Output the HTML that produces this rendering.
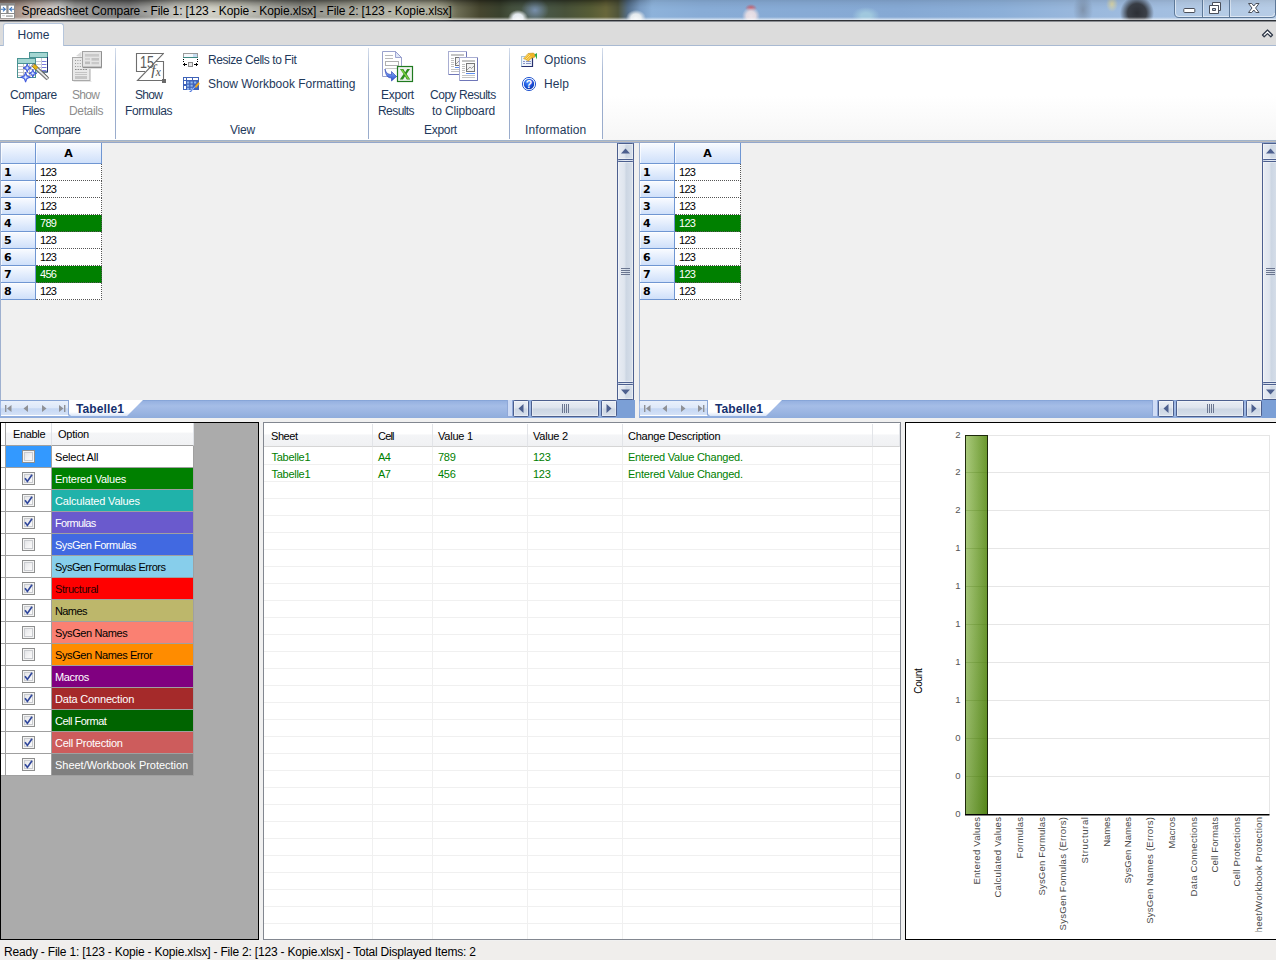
<!DOCTYPE html>
<html lang="en">
<head>
<meta charset="utf-8">
<title>Spreadsheet Compare</title>
<style>
*{box-sizing:border-box;margin:0;padding:0}
html,body{width:1276px;height:960px;overflow:hidden;background:#f0f0f0}
body{position:relative;font-family:"Liberation Sans",sans-serif;font-size:12px;color:#000}
.abs{position:absolute}
/* ---------- title bar ---------- */
#title{left:0;top:0;width:1276px;height:22px;overflow:hidden;
 background:
  radial-gradient(ellipse 10px 8px at 518px 18px,#f2f5f7 0,#e4eaee 50%,rgba(228,234,238,0) 100%),
  radial-gradient(ellipse 14px 12px at 535px 10px,#7890ac 0,rgba(120,144,172,0) 100%),
  radial-gradient(ellipse 10px 8px at 636px 18px,#f2f5f7 0,#e4eaee 50%,rgba(228,234,238,0) 100%),
  radial-gradient(ellipse 9px 9px at 751px 16px,#ebe3e8 0,#e2dae2 50%,rgba(223,220,228,0) 100%),
  radial-gradient(ellipse 6px 4px at 751px 8px,#cc5560 0,rgba(208,96,106,0) 100%),
  radial-gradient(ellipse 14px 9px at 866px 16px,#a0c8de 0,#a0c8de 35%,rgba(156,196,220,0) 100%),
  radial-gradient(ellipse 17px 17px at 1137px 13px,#2c2f35 0,#3b4048 55%,rgba(60,64,72,0) 100%),
  radial-gradient(ellipse 6px 8px at 1112px 4px,#d8d4a8 0,rgba(216,212,168,0) 100%),
  radial-gradient(ellipse 10px 16px at 1083px 10px,#7f93ad 0,rgba(127,147,173,0) 100%),
  linear-gradient(90deg,#9a857b 0,#b4a197 30px,#c6bfba 52px,#c4c4c2 60px,#8e8e8c 75px,#727272 100px,#6c6c6c 130px,#8c8c88 150px,#b6b6ae 175px,#c6c5b8 210px,#b4b4a8 240px,#8c8c84 275px,#77776f 300px,#858579 330px,#9c9c8c 370px,#a8a896 405px,#9c9c84 435px,#6c6c54 458px,#46462f 480px,#3a422e 500px,#46523f 512px,#4a5a4e 535px,#48523a 565px,#565c36 590px,#68663a 606px,#50543a 618px,#55708c 628px,#7b9dc4 640px,#8db2da 652px,#88acd6 700px,#86a9d4 900px,#8cafd8 1000px,#98b7dc 1070px,#a2bee0 1160px,#a9c3e2 1276px);
}
#title .shade{left:0;top:0;width:1276px;height:22px;background:linear-gradient(180deg,rgba(0,0,0,0) 0,rgba(0,0,0,0) 17px,rgba(255,255,255,.35) 18.5px,rgba(255,255,255,.6) 19.5px,rgba(255,255,255,.6) 20px,#2e3136 20px,#2e3136 21.2px,#8a8d92 21.2px)}
#title .dk{left:0;top:0;width:1276px;height:12px;background:linear-gradient(180deg,rgba(0,0,0,.45) 0,rgba(0,0,0,.22) 3px,rgba(0,0,0,.04) 7px,rgba(0,0,0,0) 10px);-webkit-mask-image:linear-gradient(90deg,#000 0,#000 600px,rgba(0,0,0,.22) 655px);mask-image:linear-gradient(90deg,#000 0,#000 600px,rgba(0,0,0,.22) 655px)}
#title .glow{left:24px;top:6px;width:426px;height:11px;background:rgba(255,255,255,.28);filter:blur(4px)}
#title .txt{left:21.5px;top:3px;font-size:12px;letter-spacing:-.11px;line-height:16px;white-space:nowrap;color:#000}
/* ---------- tab strip + ribbon ---------- */
#tabs{left:0;top:22px;width:1276px;height:24px;background:#dcdcdc;border-bottom:1px solid #a9bad2}
#hometab{left:3px;top:23px;width:61px;height:23px;background:#fff;border:1px solid #b6c6dc;border-bottom:none;border-radius:3px 3px 0 0;text-align:center;line-height:22px;font-size:12px;color:#1e395b}
#ribbon{left:0;top:46px;width:1276px;height:97px;background:linear-gradient(#fff,#fff) 0 0/602px 94px no-repeat,linear-gradient(180deg,#fff 0,#fff 50px,#f6f6f6 94px,#a0b3cb 94px,#a0b3cb 95px,#bcbcbc 95px,#bcbcbc 96px,#93a7cc 96px)}
.rl{font-size:12px;color:#1e395b;white-space:nowrap;line-height:16px;text-align:center}
.dis{color:#8d8d8d}
.gsep{top:48px;width:1px;height:91px;background:linear-gradient(180deg,#d5deec 0,#a9b9d4 25%,#9aaccc 60%,#9aaccc 100%)}

/* ---------- sheet panes ---------- */
.pane{top:143px;height:275px;background:#f0f0f0;overflow:hidden}
.pane .lb{left:0;top:0;width:1px;height:276px;background:#9eb0cf}
.hc{background:linear-gradient(180deg,#f9fbff 0,#e6effd 45%,#cfe0fa 100%);border-right:1px solid #6f96d2;border-bottom:1px solid #6f96d2;box-shadow:inset 1px 1px 0 rgba(255,255,255,.7);font:bold 11px "DejaVu Sans","Liberation Sans",sans-serif;color:#000}
.rh{left:1px;width:35px;height:17px;line-height:17.5px;padding-left:3px;overflow:hidden}
.ch{top:0;height:21px;line-height:22.5px;text-align:center;overflow:hidden}
.c{left:36px;width:66px;height:17px;background:#fff;border-right:1px dotted #555;border-bottom:1px dotted #555;font-size:11px;letter-spacing:-.7px;line-height:16px;padding-left:4px;color:#000}
.c.g{background:#008000;color:#fff}
.vs{top:0;width:17px;height:257px;border-left:1px solid #56689a;border-right:1px solid #56689a;background:linear-gradient(90deg,#c3cfe2 0,#dbe3ef 30%,#e6ecf5 50%,#d0dae9 100%)}
.sbtn{background:linear-gradient(180deg,#e8ecf3 0,#dfe5ee 42%,#ccd6e3 55%,#d8e0eb 100%);border:1px solid #4c5f8e;border-radius:1.5px;box-shadow:inset 0 0 0 1px rgba(255,255,255,.4)}
.sbtnv{background:linear-gradient(90deg,#e8ecf3 0,#dfe5ee 42%,#ccd6e3 55%,#d8e0eb 100%);border:1px solid #4c5f8e;border-radius:1.5px;box-shadow:inset 0 0 0 1px rgba(255,255,255,.4)}
.tabbar{left:0;top:257px;height:18px;background:linear-gradient(180deg,#7f9fd4 0,#97b2e1 1.5px,#a5bde7 6px,#9bb5e2 12px,#8facdc 18px)}
.nav{left:1px;top:0;width:68px;height:16px;border-top:1px solid #86a3d4;background:linear-gradient(180deg,#e9f0fb 0,#dde8f9 50%,#c5d7f3 55%,#d5e2f7 100%);border-right:1px solid #8aa6d6;border-bottom:1px solid #fff}
.stab{top:0;height:16px}
.stabtxt{font:bold 12px "Liberation Sans",sans-serif;color:#15306e;letter-spacing:.12px;line-height:16px;top:1px}
.corner{background:#7b9fd6}

/* ---------- lower panels ---------- */
#opt{left:0;top:422px;width:259px;height:518px;background:#ababab;border:1px solid #000}
.oh{top:0;height:23px;background:linear-gradient(180deg,#fff 0,#fff 40%,#f4f5f7 48%,#f1f2f4 100%);border-right:1px solid #dfe2e7;border-bottom:1px solid #a0a0a0;font-size:11px;line-height:23px;white-space:nowrap}
.orh{left:0;width:5px;background:#fff;border-right:1px solid #a0a0a0;border-bottom:1px solid #a0a0a0}
.orow{left:0;width:193px;height:22px}
.ock{left:5px;top:0;width:46px;height:22px;background:#fff;border-right:1px solid #a0a0a0;border-bottom:1px solid #a0a0a0}
.olb{left:51px;top:0;width:142px;height:22px;border-right:1px solid #a0a0a0;border-bottom:1px solid #a0a0a0;font-size:11px;line-height:23px;padding-left:3px;white-space:nowrap;color:#fff;overflow:hidden}
.cb{left:16px;top:4px;width:13px;height:13px;border:1px solid #8e8f8f;background:linear-gradient(135deg,#dcdee2 0,#f3f3f4 55%,#fff 100%);box-shadow:inset 0 0 0 1px #f4f4f4,inset 0 0 0 2px #c9cbcf}
#list{left:263px;top:422px;width:638px;height:518px;background:#fff;border:1px solid #828790}
.lh{top:1px;height:23px;background:linear-gradient(180deg,#fff 0,#fff 45%,#f4f5f7 50%,#f0f1f3 100%);border-right:1px solid #e2e4e8;border-bottom:1px solid #d5d5d5;font-size:11px;line-height:25px;white-space:nowrap}
.lr{font-size:11px;color:#008000;line-height:16px;white-space:nowrap}
#chart{left:905px;top:422px;width:380px;height:518px;background:#fff;border:1px solid #000}
#status{left:0;top:941px;width:1276px;height:19px;background:#f0eeec;font-size:12px;line-height:23px;overflow:hidden;padding-left:4px;letter-spacing:-.2px;white-space:nowrap}
</style>
</head>
<body>
<!-- TITLE -->
<div id="title" class="abs"><div class="dk abs"></div><div class="shade abs"></div><div class="glow abs"></div>
<svg class="abs" style="left:0;top:0" width="22" height="22"><rect x="0" y="3" width="15" height="15.5" fill="#8b8b8b"/><rect x="1" y="5.6" width="5.3" height="7.4" fill="#fff"/><rect x="8.6" y="5.6" width="5.4" height="7.4" fill="#fff"/><path d="M1 9.3H6M3 7.2L5.2 9.3L3 11.4" stroke="#3f78c0" stroke-width="1.1" fill="none"/><path d="M14 9.3H9M12 7.2L9.8 9.3L12 11.4" stroke="#3f78c0" stroke-width="1.1" fill="none"/><rect x="1" y="14" width="13" height="4" fill="#fff"/><rect x="6" y="15.2" width="6.8" height="1.8" fill="#b5b5b5"/><rect x="2.2" y="15.2" width="2.6" height="1" fill="#c5c5c5"/></svg>
<div class="txt abs">Spreadsheet Compare - File 1: [123 - Kopie - Kopie.xlsx] - File 2: [123 - Kopie.xlsx]</div>
<svg class="abs" style="left:1170px;top:0" width="106" height="22"><path d="M4.5 0V13Q4.5 17.5 9 17.5H101Q105.5 17.5 105.5 14V0" fill="rgba(255,255,255,.16)" stroke="#5d7898" stroke-width="1"/><path d="M5.5 0V13Q5.5 16.5 9 16.5H101Q104.5 16.5 104.5 13" fill="none" stroke="rgba(255,255,255,.55)" stroke-width="1"/><path d="M32.5 0V17M59.5 0V17" stroke="#5d7898"/><path d="M33.5 0V16.5M60.5 0V16.5" stroke="rgba(255,255,255,.45)"/>
<rect x="13.8" y="8.5" width="11" height="4" rx=".8" fill="#fff" stroke="#4a4f5a" stroke-width="1"/>
<path d="M42.5 2.5H50.5V10.500H48.5V5.5H42.5Z" fill="#fff" stroke="#4a4f5a"/><path d="M39.500 5.500H48.5V13.500H39.500Z M42.5 8.500V10.500H45.5V8.500Z" fill="#fff" fill-rule="evenodd" stroke="#4a4f5a"/>
<path d="M78.500 3.500H81.8L83.800 6L85.800 3.500H89L85.600 8L89 12.500H85.800L83.800 10L81.800 12.500H78.500L82 8Z" fill="#fff" stroke="#4a4f5a" stroke-width="1" stroke-linejoin="round"/></svg>
</div>
<!-- TABS -->
<div id="tabs" class="abs"><svg class="abs" style="left:1261px;top:7px" width="14" height="10"><path d="M1.5 6L6.500 1L11.500 6L9.800 7.700L6.500 4.600L3.200 7.700Z" fill="#fff" stroke="#2f3848" stroke-width="1.300" stroke-linejoin="round"/></svg></div>
<div id="ribbon" class="abs"></div>
<div id="hometab" class="abs">Home</div>

<!-- ribbon labels -->
<div class="rl abs" style="left:10px;top:87px;letter-spacing:-.36px">Compare</div>
<div class="rl abs" style="left:22px;top:103px;letter-spacing:-.59px">Files</div>
<div class="rl abs dis" style="left:72px;top:87px;letter-spacing:-.68px">Show</div>
<div class="rl abs dis" style="left:69px;top:103px;letter-spacing:-.35px">Details</div>
<div class="rl abs" style="left:135px;top:87px;letter-spacing:-.68px">Show</div>
<div class="rl abs" style="left:125px;top:103px;letter-spacing:-.35px">Formulas</div>
<div class="rl abs" style="left:208px;top:52px;letter-spacing:-.44px">Resize Cells to Fit</div>
<div class="rl abs" style="left:208px;top:76px;letter-spacing:-.02px">Show Workbook Formatting</div>
<div class="rl abs" style="left:381px;top:87px;letter-spacing:-.3px">Export</div>
<div class="rl abs" style="left:378px;top:103px;letter-spacing:-.57px">Results</div>
<div class="rl abs" style="left:430px;top:87px;letter-spacing:-.47px">Copy Results</div>
<div class="rl abs" style="left:432px;top:103px;letter-spacing:-.14px">to Clipboard</div>
<div class="rl abs" style="left:544px;top:52px;letter-spacing:.1px">Options</div>
<div class="rl abs" style="left:544px;top:76px;letter-spacing:.1px">Help</div>
<div class="rl abs" style="left:34px;top:122px;letter-spacing:-.4px">Compare</div>
<div class="rl abs" style="left:230px;top:122px;letter-spacing:-.23px">View</div>
<div class="rl abs" style="left:424px;top:122px;letter-spacing:-.3px">Export</div>
<div class="rl abs" style="left:525px;top:122px;letter-spacing:.12px">Information</div>
<div class="gsep abs" style="left:115px"></div>
<div class="gsep abs" style="left:368px"></div>
<div class="gsep abs" style="left:509px"></div>
<div class="gsep abs" style="left:602px"></div>
<svg class="abs" style="left:0;top:0" width="610" height="140" font-family="'Liberation Sans',sans-serif">
<defs><linearGradient id="wand" x1="0" y1="0" x2="1" y2="0"><stop offset="0" stop-color="#777"/><stop offset=".5" stop-color="#fff"/><stop offset="1" stop-color="#666"/></linearGradient><radialGradient id="help" cx=".4" cy=".3" r=".8"><stop offset="0" stop-color="#4f8dff"/><stop offset=".6" stop-color="#1750d8"/><stop offset="1" stop-color="#0a2f9c"/></radialGradient><linearGradient id="arr" x1="0" y1="0" x2="0" y2="1"><stop offset="0" stop-color="#9cc0ff"/><stop offset="1" stop-color="#2a4fd0"/></linearGradient></defs>
<g><rect x="29.5" y="52.5" width="18" height="19.5" fill="#fff" stroke="#4a9393"/><rect x="30" y="53" width="17" height="4" fill="#a4d6d2"/><path d="M29.5 57.5H47.5" stroke="#4a9393"/><path d="M47.5 57V72H41" stroke="#27306e" fill="none"/><path d="M30 61.5H47M30 64.5H47M30 67.5H47M30 70.5H47" stroke="#c9c9d8" /><path d="M41.5 58V71M35.5 58V71" stroke="#c9c9d8"/><path d="M42 61.5H46M42 64.5H46M42 67.5H46M42 70.5H46" stroke="#7a7ae0"/><rect x="17.5" y="58.5" width="18" height="19" fill="#fff" stroke="#4a9393"/><rect x="18" y="59" width="17" height="4" fill="#a4d6d2"/><path d="M17.5 63.5H35.5" stroke="#4a9393"/><path d="M18 66.5H35M18 69.5H35M18 72.5H35M18 75.5H35M23.5 64V77M29.5 64V77" stroke="#c4c4c4"/><path d="M27.2 63.8L28.4 66.8L31.4 68.0L28.4 69.2L27.2 72.2L26.0 69.2L23.0 68.0L26.0 66.8Z" fill="#6f8cf2" stroke="#2b44d6" stroke-width=".8"/><path d="M27.2 66.1L27.7 67.5L29.1 68.0L27.7 68.5L27.2 69.9L26.7 68.5L25.3 68.0L26.7 67.5Z" fill="#e9efff"/><path d="M32.8 69.3L33.9 72.2L36.8 73.3L33.9 74.4L32.8 77.3L31.7 74.4L28.8 73.3L31.7 72.2Z" fill="#6f8cf2" stroke="#2b44d6" stroke-width=".8"/><path d="M32.8 71.5L33.3 72.8L34.6 73.3L33.3 73.8L32.8 75.1L32.3 73.8L31.0 73.3L32.3 72.8Z" fill="#e9efff"/><path d="M25.6 72.2L27.0 75.8L30.6 77.2L27.0 78.6L25.6 82.2L24.2 78.6L20.6 77.2L24.2 75.8Z" fill="#6f8cf2" stroke="#2b44d6" stroke-width=".8"/><path d="M25.6 75.0L26.2 76.6L27.9 77.2L26.2 77.8L25.6 79.5L25.0 77.8L23.4 77.2L25.0 76.6Z" fill="#e9efff"/><g transform="translate(32.5,64.5) rotate(-47)"><rect x="-1.6" y="0" width="3.2" height="21" rx="1.2" fill="url(#wand)" stroke="#555" stroke-width=".7"/><rect x="-1.6" y="1.5" width="3.2" height="4.5" fill="#e8b414" stroke="#9a7400" stroke-width=".5"/></g></g>
<g><rect x="73.5" y="81" width="18" height="1" fill="#e4e4e4"/><rect x="72.5" y="57.5" width="17.5" height="23" fill="#e9e9e9" stroke="#a9a9a9"/><path d="M75 60.5H88M75 63.5H88M75 66.5H88" stroke="#9a9a9a" stroke-dasharray="1 1.4"/><path d="M75 69.5H87" stroke="#8a8a8a" stroke-dasharray="1.6 1"/><path d="M75 72.5H87M75 74.5H87" stroke="#c4c4c4"/><rect x="75" y="76" width="12" height="3" fill="#c6c6c6"/><path d="M76 56L81.5 51.5V57" fill="#dcdcdc"/><rect x="82.5" y="68" width="19.5" height="1" fill="#e0e0e0"/><rect x="82.5" y="51.5" width="19" height="15.5" fill="#e4e4e4" stroke="#a3a3a3"/><path d="M101.5 52V67.5H83" stroke="#8f8f8f" fill="none"/><rect x="85" y="54" width="14" height="2.6" fill="#c9c9c9"/><rect x="85" y="58" width="5" height="2" fill="#cfcfcf"/><rect x="91.5" y="58" width="7.5" height="2.6" fill="#c2c2c2"/><rect x="85" y="61.5" width="5" height="2.6" fill="#bdbdbd"/><rect x="91.5" y="62" width="7.5" height="2.2" fill="#c9c9c9"/></g>
<g fill="none" stroke="#6e6e6e" stroke-width="1.1"><path d="M163.5 53.5H136.5V71.5H145"/><path d="M163.8 53.2L137.5 80.5H163.5V61.5H156"/></g><rect x="162" y="79" width="4" height="4" fill="#6a6a6a"/><text x="140" y="68" font-size="16.5" fill="#5a5a5a" textLength="14" lengthAdjust="spacingAndGlyphs" style="font-weight:normal">15</text><text x="151.2" y="75" font-size="15.5" font-style="italic" font-family="'Liberation Serif',serif" fill="#555">f</text><text x="155.8" y="75.5" font-size="11.5" font-style="italic" font-family="'Liberation Serif',serif" fill="#555">x</text>
<g><rect x="183.5" y="53.5" width="14" height="4" fill="#f4f8fc" stroke="#9a9a9a"/><rect x="193" y="54" width="4" height="3" fill="#c5dcf0"/><path d="M183 57.5H198" stroke="#3f8a84"/><path d="M183.5 59V63M197.5 59V63" stroke="#000" stroke-dasharray="1 1"/><path d="M183 64.5H187M194 64.5H198" stroke="#000" stroke-width="1"/><path d="M184.5 63V66M196.5 63V66" stroke="#000" stroke-width="1"/><rect x="188.5" y="62.5" width="4" height="4" fill="#e8e8e8" stroke="#8a8a8a"/></g>
<g><rect x="183" y="77" width="16" height="13" fill="#3f63b8"/><rect x="184" y="78" width="2" height="2" fill="#fff"/><rect x="187" y="78" width="5" height="2" fill="#fff"/><rect x="193" y="78" width="5" height="2" fill="#fff"/><rect x="184" y="81" width="2" height="3" fill="#fff"/><rect x="184" y="86" width="2" height="3" fill="#fff"/><g fill="#8fb6ee"><rect x="187" y="81.5" width="2.2" height="2"/><rect x="190.5" y="81.5" width="2.2" height="2"/><rect x="194" y="81.5" width="2.2" height="2"/><rect x="187" y="84.7" width="2.2" height="2"/><rect x="190.5" y="84.7" width="2.2" height="2"/><rect x="187" y="87.8" width="2.2" height="2"/><rect x="190.5" y="87.8" width="2.2" height="2"/></g><path d="M198.8 82L194.5 86.5L196 88L199.6 84Z" fill="#f0a818"/><path d="M195.5 86L191 92L189 91.6C192 90 193.5 88 194 85.4Z" fill="#3a66d8"/><path d="M195 86.5L192 90.5" stroke="#bcd4ff" stroke-width=".8"/></g>
<g><path d="M382.5 51.5H395.5L401.5 57.5V76.5H382.5Z" fill="#fff" stroke="#9aa2cc"/><path d="M395.5 51.5V57.5H401.5Z" fill="#dfe6f6" stroke="#8a92c8" stroke-width=".8"/><path d="M385 55.5H393M385 58.5H393" stroke="#b9b9b9"/><rect x="385.5" y="61.5" width="13" height="4" fill="#fff" stroke="#b0b0b0"/><path d="M385 68.5H397" stroke="#c9c9c9"/><path d="M385 69C386 73 388 74.5 391.5 74.5V71.5L396.5 76.5L391.5 81V78C387.5 78 385.5 75 385 69Z" fill="url(#arr)" stroke="#2438b0" stroke-width=".6"/><rect x="397.5" y="66.5" width="15" height="15" fill="#eef2ee" stroke="#1f7a1f" stroke-width="1.2"/><path d="M400 69H403.3L405.2 72.2L407.2 69H410L406.6 74L410.2 79.5H406.8L405 76.2L403 79.5H399.8L403.6 74Z" fill="#2c8c1c"/><path d="M401.5 69.5L408.5 79" stroke="#7fd040" stroke-width="1.3"/></g>
<g><rect x="448.5" y="51.5" width="18" height="23" fill="#fff" stroke="#a9aed2"/><path d="M466.5 52V74.5H449" stroke="#6f76b8" fill="none"/><rect x="451" y="54" width="13" height="2" fill="#c4c4c4"/><path d="M451 58.5H454M451 60.5H454M451 62.5H454M451 64.5H454M451 66.5H454" stroke="#c0c0c0"/><rect x="455.5" y="57.5" width="8" height="8" fill="#f1f1f1" stroke="#777"/><path d="M456 64L459 61L460.5 62.5L463 60" stroke="#888" fill="none" stroke-width=".8"/><path d="M455 67.5H464" stroke="#5b8cf0"/><path d="M451 69.5H464M451 71.5H464" stroke="#c4c4c4"/><rect x="459.5" y="57.5" width="18" height="23" fill="#fff" stroke="#a9aed2"/><path d="M477.5 58V80.5H460" stroke="#6f76b8" fill="none"/><rect x="462" y="60" width="13" height="2" fill="#c4c4c4"/><path d="M462 64.5H465M462 66.5H465M462 68.5H465M462 70.5H465M462 72.5H465" stroke="#c0c0c0"/><rect x="466.5" y="63.5" width="8" height="8" fill="#f1f1f1" stroke="#777"/><path d="M467 70L470 67L471.5 68.5L474 66" stroke="#888" fill="none" stroke-width=".8"/><path d="M466 73.5H475" stroke="#5b8cf0"/><path d="M462 75.5H475M462 77.5H475" stroke="#c4c4c4"/></g>
<g><rect x="521.5" y="56.5" width="11" height="10" fill="#eef4fb" stroke="#a8c4dc"/><path d="M532.5 57V66.5H521.5" stroke="#27306e" fill="none" stroke-width="1.2"/><path d="M523 61.5H525M526 61.5H531M523 63.5H525M526 63.5H531" stroke="#8a96c8"/><path d="M523.5 58.5L528 53.5L533.5 53L535 54.5L535 57L531 58.5L528.5 61Z" fill="#f0b428" stroke="#b88a18" stroke-width=".5"/><path d="M524 58.5L528.5 54M525.5 59.5L530 55M527 60.5L531 56.5" stroke="#fff3b0" stroke-width=".7"/><path d="M534.5 54.5L537 53V59.5Z" fill="#2fa84a"/></g>
<g><circle cx="529" cy="84" r="6.6" fill="#fff" stroke="#2a5bd0" stroke-width="1"/><circle cx="529" cy="84" r="5.2" fill="url(#help)"/><text x="529" y="88" font-size="10.5" font-weight="bold" fill="#fff" text-anchor="middle">?</text></g>
</svg>


<!--SHEETS-START-->
<div class="pane abs" style="left:0px;width:635px">
<div class="lb abs"></div>
<div class="hc ch abs" style="left:1px;width:35px"></div><div class="hc ch abs" style="left:36px;width:66px">A</div>
<div class="hc rh abs" style="top:21px">1</div><div class="c abs" style="top:21px">123</div>
<div class="hc rh abs" style="top:38px">2</div><div class="c abs" style="top:38px">123</div>
<div class="hc rh abs" style="top:55px">3</div><div class="c abs" style="top:55px">123</div>
<div class="hc rh abs" style="top:72px">4</div><div class="c g abs" style="top:72px">789</div>
<div class="hc rh abs" style="top:89px">5</div><div class="c abs" style="top:89px">123</div>
<div class="hc rh abs" style="top:106px">6</div><div class="c abs" style="top:106px">123</div>
<div class="hc rh abs" style="top:123px">7</div><div class="c g abs" style="top:123px">456</div>
<div class="hc rh abs" style="top:140px">8</div><div class="c abs" style="top:140px">123</div>
<div class="vs abs" style="left:617px"></div>
<div class="sbtnv abs" style="left:617px;top:0;width:17px;height:17px"></div><svg class="abs" style="left:621px;top:5px" width="9" height="6"><path d="M0 5.5L4.5 0.5L9 5.5Z" fill="#4c5f8e"/></svg>
<div class="sbtnv abs" style="left:617px;top:18px;width:17px;height:222px"></div><svg class="abs" style="left:621px;top:125px" width="9" height="8"><path d="M0 .5H9M0 2.5H9M0 4.5H9M0 6.5H9" stroke="#6b7690" stroke-width="1"/></svg>
<div class="sbtnv abs" style="left:617px;top:241px;width:17px;height:16px"></div><svg class="abs" style="left:621px;top:246px" width="9" height="6"><path d="M0 .5L4.5 5.5L9 .5Z" fill="#4c5f8e"/></svg>
<div class="tabbar abs" style="width:635px">
<div class="nav abs"></div>
<svg class="abs" style="left:1px;top:0" width="68" height="16"><g fill="#8f9196"><rect x="4" y="5" width="1.4" height="7"/><path d="M10.5 5V12L6 8.5Z"/><path d="M27 5V12L22.5 8.5Z"/><path d="M41 5V12L45.5 8.5Z"/><path d="M58 5V12L62.5 8.5Z"/><rect x="63" y="5" width="1.4" height="7"/></g></svg>
<svg class="abs" style="left:69px;top:0" width="76" height="18"><defs><linearGradient id="tg0" x1="0" y1="0" x2="0" y2="1"><stop offset="0" stop-color="#fff"/><stop offset=".75" stop-color="#fff"/><stop offset="1" stop-color="#d6e3f7"/></linearGradient></defs><path d="M0 0H74L58 16H2L0 14Z" fill="url(#tg0)"/></svg>
<div class="stabtxt abs" style="left:76px">Tabelle1</div>
<div class="abs" style="left:507px;top:0;width:6px;height:17px;background:#cfdcf5;border:1px solid #8fa8d8;border-top:none"></div><div class="sbtn abs" style="left:513px;top:0;width:16px;height:17px"></div><svg class="abs" style="left:518px;top:4px" width="6" height="9"><path d="M5.5 0L.5 4.5L5.5 9Z" fill="#4c5f8e"/></svg><div class="sbtn abs" style="left:531px;top:0;width:68px;height:17px"></div><svg class="abs" style="left:562px;top:4px" width="8" height="9"><path d="M.5 0V9M2.5 0V9M4.5 0V9M6.5 0V9" stroke="#6b7690" stroke-width="1"/></svg><div class="sbtn abs" style="left:601px;top:0;width:16px;height:17px"></div><svg class="abs" style="left:606px;top:4px" width="6" height="9"><path d="M.5 0L5.5 4.5L.5 9Z" fill="#4c5f8e"/></svg><div class="corner abs" style="left:617px;top:0;width:18px;height:18px"></div>
</div>
</div>
<div class="pane abs" style="left:639px;width:640px">
<div class="lb abs"></div>
<div class="hc ch abs" style="left:1px;width:35px"></div><div class="hc ch abs" style="left:36px;width:66px">A</div>
<div class="hc rh abs" style="top:21px">1</div><div class="c abs" style="top:21px">123</div>
<div class="hc rh abs" style="top:38px">2</div><div class="c abs" style="top:38px">123</div>
<div class="hc rh abs" style="top:55px">3</div><div class="c abs" style="top:55px">123</div>
<div class="hc rh abs" style="top:72px">4</div><div class="c g abs" style="top:72px">123</div>
<div class="hc rh abs" style="top:89px">5</div><div class="c abs" style="top:89px">123</div>
<div class="hc rh abs" style="top:106px">6</div><div class="c abs" style="top:106px">123</div>
<div class="hc rh abs" style="top:123px">7</div><div class="c g abs" style="top:123px">123</div>
<div class="hc rh abs" style="top:140px">8</div><div class="c abs" style="top:140px">123</div>
<div class="vs abs" style="left:623px"></div>
<div class="sbtnv abs" style="left:623px;top:0;width:17px;height:17px"></div><svg class="abs" style="left:627px;top:5px" width="9" height="6"><path d="M0 5.5L4.5 0.5L9 5.5Z" fill="#4c5f8e"/></svg>
<div class="sbtnv abs" style="left:623px;top:18px;width:17px;height:222px"></div><svg class="abs" style="left:627px;top:125px" width="9" height="8"><path d="M0 .5H9M0 2.5H9M0 4.5H9M0 6.5H9" stroke="#6b7690" stroke-width="1"/></svg>
<div class="sbtnv abs" style="left:623px;top:241px;width:17px;height:16px"></div><svg class="abs" style="left:627px;top:246px" width="9" height="6"><path d="M0 .5L4.5 5.5L9 .5Z" fill="#4c5f8e"/></svg>
<div class="tabbar abs" style="width:640px">
<div class="nav abs"></div>
<svg class="abs" style="left:1px;top:0" width="68" height="16"><g fill="#8f9196"><rect x="4" y="5" width="1.4" height="7"/><path d="M10.5 5V12L6 8.5Z"/><path d="M27 5V12L22.5 8.5Z"/><path d="M41 5V12L45.5 8.5Z"/><path d="M58 5V12L62.5 8.5Z"/><rect x="63" y="5" width="1.4" height="7"/></g></svg>
<svg class="abs" style="left:69px;top:0" width="76" height="18"><defs><linearGradient id="tg639" x1="0" y1="0" x2="0" y2="1"><stop offset="0" stop-color="#fff"/><stop offset=".75" stop-color="#fff"/><stop offset="1" stop-color="#d6e3f7"/></linearGradient></defs><path d="M0 0H74L58 16H2L0 14Z" fill="url(#tg639)"/></svg>
<div class="stabtxt abs" style="left:76px">Tabelle1</div>
<div class="abs" style="left:513px;top:0;width:6px;height:17px;background:#cfdcf5;border:1px solid #8fa8d8;border-top:none"></div><div class="sbtn abs" style="left:519px;top:0;width:16px;height:17px"></div><svg class="abs" style="left:524px;top:4px" width="6" height="9"><path d="M5.5 0L.5 4.5L5.5 9Z" fill="#4c5f8e"/></svg><div class="sbtn abs" style="left:537px;top:0;width:68px;height:17px"></div><svg class="abs" style="left:568px;top:4px" width="8" height="9"><path d="M.5 0V9M2.5 0V9M4.5 0V9M6.5 0V9" stroke="#6b7690" stroke-width="1"/></svg><div class="sbtn abs" style="left:607px;top:0;width:16px;height:17px"></div><svg class="abs" style="left:612px;top:4px" width="6" height="9"><path d="M.5 0L5.5 4.5L.5 9Z" fill="#4c5f8e"/></svg><div class="corner abs" style="left:623px;top:0;width:18px;height:18px"></div>
</div>
</div>
<!--SHEETS-END-->
<!--OPT-START-->
<div id="opt" class="abs">
<div class="orh abs" style="top:0;height:23px"></div><div class="oh abs" style="left:5px;width:46px;padding-left:7px;letter-spacing:-.35px">Enable</div><div class="oh abs" style="left:51px;width:142px;padding-left:6px;letter-spacing:-.26px">Option</div>
<div class="orow abs" style="top:23px"><div class="orh abs" style="top:0;height:22px"></div><div class="ock abs" style="background:#3399ff"><div class="cb abs"></div></div><div class="olb abs" style="background:#fff;color:#000;letter-spacing:-0.21px">Select All</div></div>
<div class="orow abs" style="top:45px"><div class="orh abs" style="top:0;height:22px"></div><div class="ock abs" style=""><div class="cb abs"></div><svg class="abs" style="left:18px;top:6px" width="9" height="9"><path d="M1 4.2L3.4 7.4L8 .8" fill="none" stroke="#31489c" stroke-width="1.7"/></svg></div><div class="olb abs" style="background:#008000;color:#fff;letter-spacing:-0.24px">Entered Values</div></div>
<div class="orow abs" style="top:67px"><div class="orh abs" style="top:0;height:22px"></div><div class="ock abs" style=""><div class="cb abs"></div><svg class="abs" style="left:18px;top:6px" width="9" height="9"><path d="M1 4.2L3.4 7.4L8 .8" fill="none" stroke="#31489c" stroke-width="1.7"/></svg></div><div class="olb abs" style="background:#20b2aa;color:#fff;letter-spacing:-0.18px">Calculated Values</div></div>
<div class="orow abs" style="top:89px"><div class="orh abs" style="top:0;height:22px"></div><div class="ock abs" style=""><div class="cb abs"></div><svg class="abs" style="left:18px;top:6px" width="9" height="9"><path d="M1 4.2L3.4 7.4L8 .8" fill="none" stroke="#31489c" stroke-width="1.7"/></svg></div><div class="olb abs" style="background:#6a5acd;color:#fff;letter-spacing:-0.65px">Formulas</div></div>
<div class="orow abs" style="top:111px"><div class="orh abs" style="top:0;height:22px"></div><div class="ock abs" style=""><div class="cb abs"></div></div><div class="olb abs" style="background:#4169e1;color:#fff;letter-spacing:-0.47px">SysGen Formulas</div></div>
<div class="orow abs" style="top:133px"><div class="orh abs" style="top:0;height:22px"></div><div class="ock abs" style=""><div class="cb abs"></div></div><div class="olb abs" style="background:#87ceeb;color:#000;letter-spacing:-0.48px">SysGen Formulas Errors</div></div>
<div class="orow abs" style="top:155px"><div class="orh abs" style="top:0;height:22px"></div><div class="ock abs" style=""><div class="cb abs"></div><svg class="abs" style="left:18px;top:6px" width="9" height="9"><path d="M1 4.2L3.4 7.4L8 .8" fill="none" stroke="#31489c" stroke-width="1.7"/></svg></div><div class="olb abs" style="background:#ff0000;color:#2a0000;letter-spacing:-0.39px">Structural</div></div>
<div class="orow abs" style="top:177px"><div class="orh abs" style="top:0;height:22px"></div><div class="ock abs" style=""><div class="cb abs"></div><svg class="abs" style="left:18px;top:6px" width="9" height="9"><path d="M1 4.2L3.4 7.4L8 .8" fill="none" stroke="#31489c" stroke-width="1.7"/></svg></div><div class="olb abs" style="background:#bdb76b;color:#000;letter-spacing:-0.61px">Names</div></div>
<div class="orow abs" style="top:199px"><div class="orh abs" style="top:0;height:22px"></div><div class="ock abs" style=""><div class="cb abs"></div></div><div class="olb abs" style="background:#fa8072;color:#000;letter-spacing:-0.4px">SysGen Names</div></div>
<div class="orow abs" style="top:221px"><div class="orh abs" style="top:0;height:22px"></div><div class="ock abs" style=""><div class="cb abs"></div></div><div class="olb abs" style="background:#ff8c00;color:#000;letter-spacing:-0.4px">SysGen Names Error</div></div>
<div class="orow abs" style="top:243px"><div class="orh abs" style="top:0;height:22px"></div><div class="ock abs" style=""><div class="cb abs"></div><svg class="abs" style="left:18px;top:6px" width="9" height="9"><path d="M1 4.2L3.4 7.4L8 .8" fill="none" stroke="#31489c" stroke-width="1.7"/></svg></div><div class="olb abs" style="background:#800080;color:#fff;letter-spacing:-0.35px">Macros</div></div>
<div class="orow abs" style="top:265px"><div class="orh abs" style="top:0;height:22px"></div><div class="ock abs" style=""><div class="cb abs"></div><svg class="abs" style="left:18px;top:6px" width="9" height="9"><path d="M1 4.2L3.4 7.4L8 .8" fill="none" stroke="#31489c" stroke-width="1.7"/></svg></div><div class="olb abs" style="background:#a52a2a;color:#fff;letter-spacing:-0.19px">Data Connection</div></div>
<div class="orow abs" style="top:287px"><div class="orh abs" style="top:0;height:22px"></div><div class="ock abs" style=""><div class="cb abs"></div><svg class="abs" style="left:18px;top:6px" width="9" height="9"><path d="M1 4.2L3.4 7.4L8 .8" fill="none" stroke="#31489c" stroke-width="1.7"/></svg></div><div class="olb abs" style="background:#006400;color:#fff;letter-spacing:-0.5px">Cell Format</div></div>
<div class="orow abs" style="top:309px"><div class="orh abs" style="top:0;height:22px"></div><div class="ock abs" style=""><div class="cb abs"></div><svg class="abs" style="left:18px;top:6px" width="9" height="9"><path d="M1 4.2L3.4 7.4L8 .8" fill="none" stroke="#31489c" stroke-width="1.7"/></svg></div><div class="olb abs" style="background:#cd5c5c;color:#fff;letter-spacing:-0.26px">Cell Protection</div></div>
<div class="orow abs" style="top:331px"><div class="orh abs" style="top:0;height:22px"></div><div class="ock abs" style=""><div class="cb abs"></div><svg class="abs" style="left:18px;top:6px" width="9" height="9"><path d="M1 4.2L3.4 7.4L8 .8" fill="none" stroke="#31489c" stroke-width="1.7"/></svg></div><div class="olb abs" style="background:#808080;color:#fff;letter-spacing:-0.02px">Sheet/Workbook Protection</div></div>
</div>
<!--OPT-END-->
<!--LIST-START-->
<div id="list" class="abs">
<div class="lh abs" style="left:0px;width:109px;padding-left:7px;letter-spacing:-0.44px">Sheet</div><div class="lh abs" style="left:109px;width:60px;padding-left:5px;letter-spacing:-0.8px">Cell</div><div class="lh abs" style="left:169px;width:95px;padding-left:5px;letter-spacing:-0.22px">Value 1</div><div class="lh abs" style="left:264px;width:95px;padding-left:5px;letter-spacing:-0.22px">Value 2</div><div class="lh abs" style="left:359px;width:250px;padding-left:5px;letter-spacing:-0.24px">Change Description</div><div class="lh abs" style="left:609px;width:27px;padding-left:5px;letter-spacing:0px"></div>
<svg class="abs" style="left:0;top:24px" width="636" height="492"><g stroke="#f0f0f0" stroke-width="1"><path d="M0 17.5H636"/><path d="M0 34.5H636"/><path d="M0 51.5H636"/><path d="M0 68.5H636"/><path d="M0 85.5H636"/><path d="M0 102.5H636"/><path d="M0 119.5H636"/><path d="M0 136.5H636"/><path d="M0 153.5H636"/><path d="M0 170.5H636"/><path d="M0 187.5H636"/><path d="M0 204.5H636"/><path d="M0 221.5H636"/><path d="M0 238.5H636"/><path d="M0 255.5H636"/><path d="M0 272.5H636"/><path d="M0 289.5H636"/><path d="M0 306.5H636"/><path d="M0 323.5H636"/><path d="M0 340.5H636"/><path d="M0 357.5H636"/><path d="M0 374.5H636"/><path d="M0 391.5H636"/><path d="M0 408.5H636"/><path d="M0 425.5H636"/><path d="M0 442.5H636"/><path d="M0 459.5H636"/><path d="M0 476.5H636"/><path d="M0 493.5H636"/><path d="M108.5 0V492"/><path d="M168.5 0V492"/><path d="M263.5 0V492"/><path d="M358.5 0V492"/><path d="M608.5 0V492"/></g></svg>
<div class="lr abs" style="left:7.5px;top:25.5px;letter-spacing:-0.28px">Tabelle1</div><div class="lr abs" style="left:114px;top:25.5px;letter-spacing:-0.7px">A4</div><div class="lr abs" style="left:174px;top:25.5px;letter-spacing:-0.28px">789</div><div class="lr abs" style="left:269px;top:25.5px;letter-spacing:-0.28px">123</div><div class="lr abs" style="left:364px;top:25.5px;letter-spacing:-0.22px">Entered Value Changed.</div>
<div class="lr abs" style="left:7.5px;top:42.5px;letter-spacing:-0.28px">Tabelle1</div><div class="lr abs" style="left:114px;top:42.5px;letter-spacing:-0.7px">A7</div><div class="lr abs" style="left:174px;top:42.5px;letter-spacing:-0.28px">456</div><div class="lr abs" style="left:269px;top:42.5px;letter-spacing:-0.28px">123</div><div class="lr abs" style="left:364px;top:42.5px;letter-spacing:-0.22px">Entered Value Changed.</div>
</div>
<!--LIST-END-->
<!--CHART-START-->
<div id="chart" class="abs"><svg class="abs" style="left:0;top:0" width="370" height="516" font-family="'Liberation Sans',sans-serif">
<defs><linearGradient id="bg" x1="0" y1="0" x2="1" y2="0"><stop offset="0" stop-color="#a5c774"/><stop offset="1" stop-color="#5f901e"/></linearGradient><linearGradient id="bg2" x1="0" y1="0" x2="0" y2="1"><stop offset="0" stop-color="#fff" stop-opacity=".06"/><stop offset="1" stop-color="#2a5a00" stop-opacity=".22"/></linearGradient><clipPath id="cl"><rect x="0" y="0" width="370" height="508.5"/></clipPath></defs>
<g stroke="#e6e6e6" stroke-width="1"><path d="M59 12.5H363"/><path d="M59 49.5H363"/><path d="M59 87.5H363"/><path d="M59 125.5H363"/><path d="M59 163.5H363"/><path d="M59 201.5H363"/><path d="M59 239.5H363"/><path d="M59 277.5H363"/><path d="M59 315.5H363"/><path d="M59 353.5H363"/><path d="M363.5 12V392"/></g>
<rect x="59.5" y="12.5" width="22" height="379" fill="url(#bg)"/><rect x="59.5" y="12.5" width="22" height="379" fill="url(#bg2)" stroke="#1e2a0c" stroke-width="1"/>
<g stroke="#4f7a18" stroke-opacity=".25"><path d="M60 49.5H81"/><path d="M60 87.5H81"/><path d="M60 125.5H81"/><path d="M60 163.5H81"/><path d="M60 201.5H81"/><path d="M60 239.5H81"/><path d="M60 277.5H81"/><path d="M60 315.5H81"/><path d="M60 353.5H81"/></g>
<path d="M59 391.7H363.5" stroke="#000" stroke-width="1.4"/>
<g font-size="9.5" fill="#555" text-anchor="end"><text x="54.6" y="15.4">2</text><text x="54.6" y="52.4">2</text><text x="54.6" y="90.4">2</text><text x="54.6" y="128.4">1</text><text x="54.6" y="166.4">1</text><text x="54.6" y="204.4">1</text><text x="54.6" y="242.4">1</text><text x="54.6" y="280.4">1</text><text x="54.6" y="318.4">0</text><text x="54.6" y="356.4">0</text><text x="54.6" y="394.4">0</text></g>
<text transform="translate(16,258) rotate(-90)" font-size="10" text-anchor="middle" textLength="25.5" fill="#000">Count</text>
<g font-size="9.6" fill="#4c4c4c" text-anchor="end" clip-path="url(#cl)"><text transform="translate(73.5,394) rotate(-90)" textLength="67.6">Entered Values</text><text transform="translate(95.2,394) rotate(-90)" textLength="80.6">Calculated Values</text><text transform="translate(117.0,394) rotate(-90)" textLength="41.6">Formulas</text><text transform="translate(138.6,394) rotate(-90)" textLength="78.5">SysGen Formulas</text><text transform="translate(160.3,394) rotate(-90)" textLength="113.4">SysGen Fomulas (Errors)</text><text transform="translate(182.0,394) rotate(-90)" textLength="46.5">Structural</text><text transform="translate(203.7,394) rotate(-90)" textLength="29.8">Names</text><text transform="translate(225.4,394) rotate(-90)" textLength="66.6">SysGen Names</text><text transform="translate(247.1,394) rotate(-90)" textLength="106.8">SysGen Names (Errors)</text><text transform="translate(268.8,394) rotate(-90)" textLength="31.7">Macros</text><text transform="translate(290.6,394) rotate(-90)" textLength="79.4">Data Connections</text><text transform="translate(312.2,394) rotate(-90)" textLength="55.6">Cell Formats</text><text transform="translate(333.9,394) rotate(-90)" textLength="69.6">Cell Protections</text><text transform="translate(355.6,394) rotate(-90)" textLength="122">Sheet/Workbook Protection</text></g>
</svg></div>
<!--CHART-END-->

<div id="status" class="abs">Ready - File 1: [123 - Kopie - Kopie.xlsx] - File 2: [123 - Kopie.xlsx] - Total Displayed Items: 2</div>
</body>
</html>
